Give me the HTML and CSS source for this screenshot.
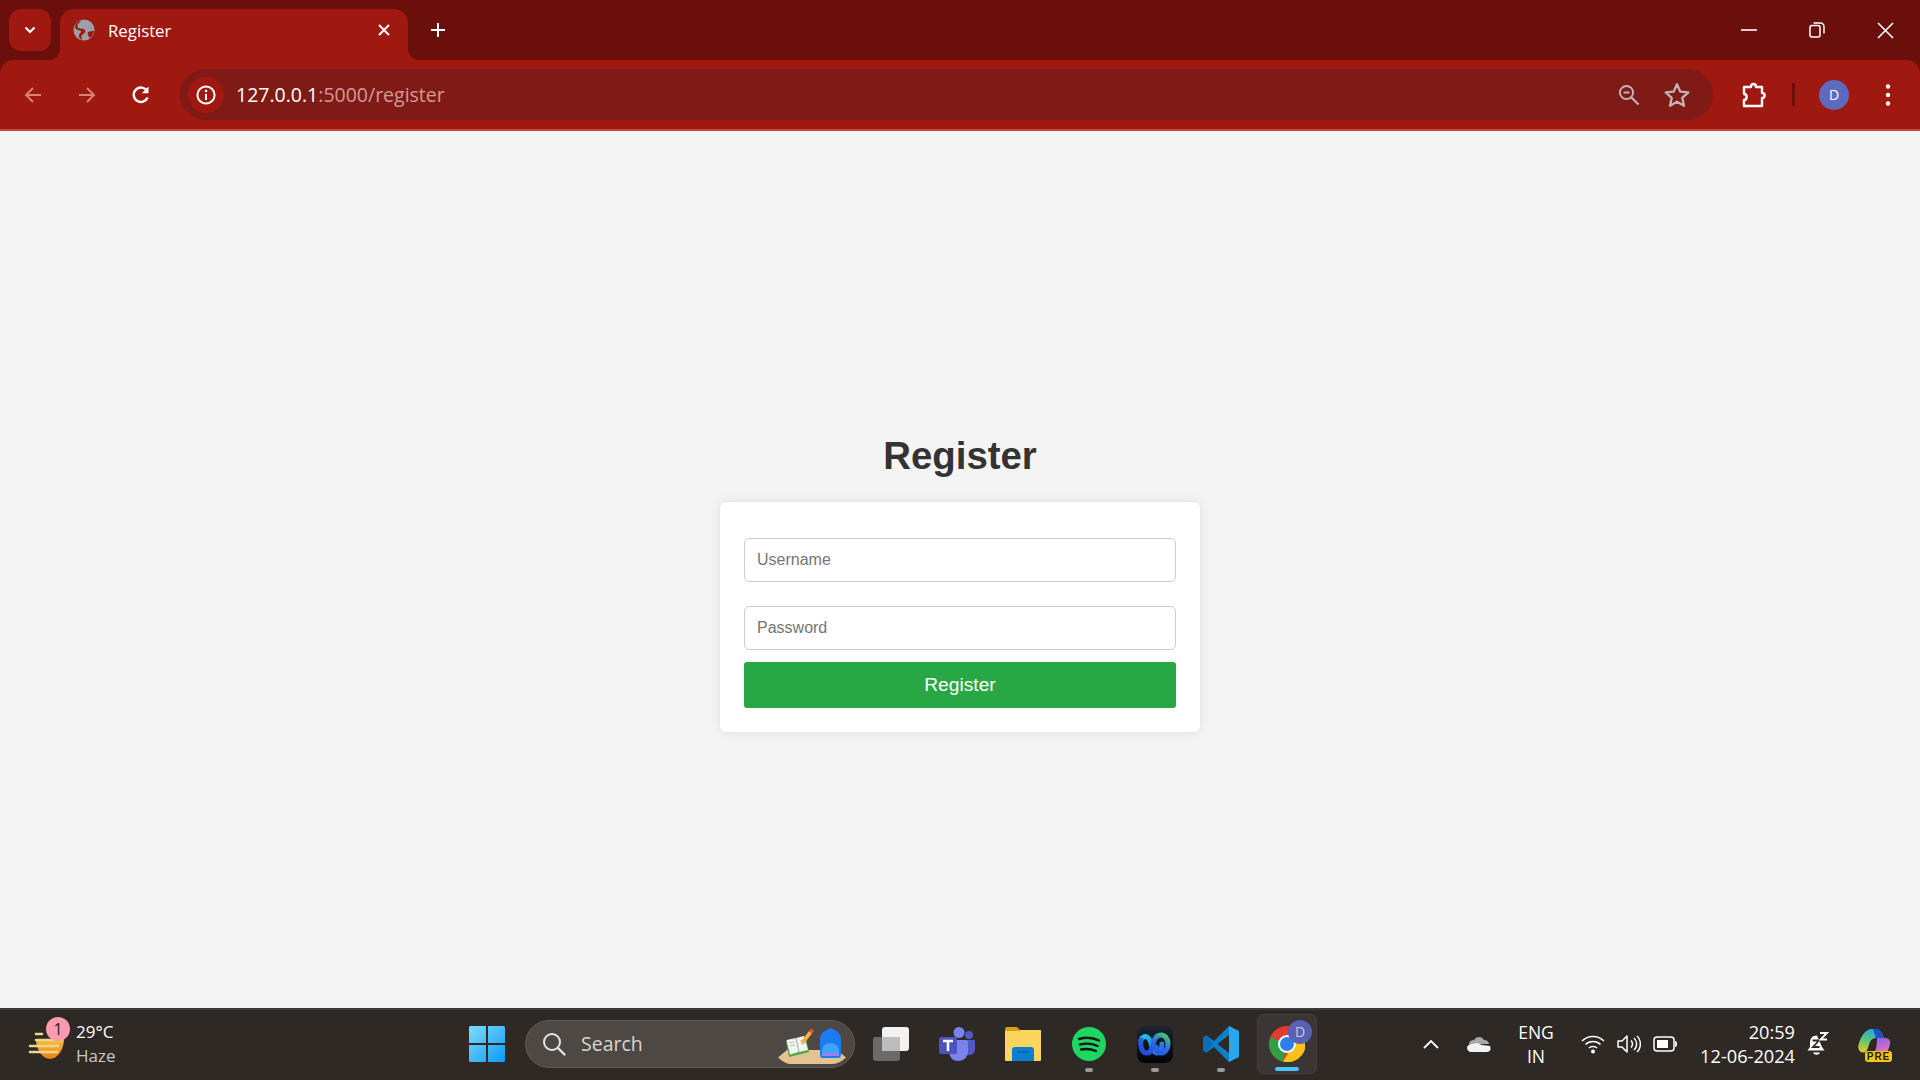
FILE: index.html
```html
<!DOCTYPE html>
<html lang="en">
<head>
    <meta charset="UTF-8">
    <title>Register</title>
    <link rel="stylesheet" href="styles.css">
</head>
<body>
    <div class="browser-top">
        <!-- Tab strip -->
        <div class="tabstrip">
            <div class="tab-search">
                <svg width="16" height="16" viewBox="0 0 16 16"><path d="M3.500 5.500 8 10l4.500-4.500" fill="none" stroke="#fff" stroke-width="2.200"/></svg>
            </div>
            <div class="tab">
                <svg class="favicon" width="22" height="22" viewBox="0 0 22 22"><circle cx="11" cy="11" r="10.500" fill="#9aa0a6"/><path d="M8 1.500C7 4 4 4.500 4.500 7.500c.5 2.500 4 2 6 2.500 2 .5 2.500 2.500 1 4-1.500 1.500-3.500 2-3 4.500l.5 2.500c-1.500-.2-2.500-2-3-3.500-.5-2 1-3 2-4.500.5-1-1-1.500-3-2S1.500 9 2 7c.5-2.500 3-5 6-5.500z" fill="#a01910"/><path d="M15 13c2-1 4-1 6-1-.5 3-2 5.500-4 7-1.500-1-3-4.500-2-6z" fill="#a01910"/></svg>
                <span class="tab-title">Register</span>
                <svg class="tab-close" width="14" height="14" viewBox="0 0 14 14"><path d="M2 2l10 10M12 2 2 12" stroke="#fff" stroke-width="2"/></svg>
            </div>
            <svg class="new-tab" width="18" height="18" viewBox="0 0 18 18"><path d="M9 2v14M2 9h14" stroke="#fff" stroke-width="2"/></svg>
            <div class="win-controls">
                <svg width="16" height="16" viewBox="0 0 16 16"><path d="M0 8h16" stroke="#fff" stroke-width="1.600"/></svg>
                <svg width="16" height="16" viewBox="0 0 16 16"><rect x="1" y="3.500" width="10" height="11.500" rx="2" fill="none" stroke="#fff" stroke-width="1.500"/><path d="M4.500 1h7a3.500 3.500 0 0 1 3.500 3.500v7" fill="none" stroke="#fff" stroke-width="1.400"/></svg>
                <svg width="17" height="17" viewBox="0 0 17 17"><path d="M1 1l15 15M16 1 1 16" stroke="#fff" stroke-width="1.600"/></svg>
            </div>
        </div>

        <!-- Toolbar -->
        <div class="toolbar">
            <svg class="nav-btn" width="20" height="20" viewBox="0 0 20 20"><path d="M18 10H3M10 3l-7 7 7 7" fill="none" stroke="#d9827b" stroke-width="2"/></svg>
            <svg class="nav-btn" width="20" height="20" viewBox="0 0 20 20"><path d="M2 10h15M10 3l7 7-7 7" fill="none" stroke="#d9827b" stroke-width="2"/></svg>
            <svg class="nav-btn" width="20" height="20" viewBox="0 0 20 20"><path d="M16.600 12.500a7.200 7.200 0 1 1-.6-6.600" fill="none" stroke="#fff" stroke-width="2.400"/><path d="M17.500 1.500v6.700h-6.700z" fill="#fff"/></svg>
            <div class="omnibox">
                <div class="site-info">
                    <svg width="20" height="20" viewBox="0 0 20 20"><circle cx="10" cy="10" r="8.600" fill="none" stroke="#fff" stroke-width="2"/><path d="M10 9v6" stroke="#fff" stroke-width="2"/><circle cx="10" cy="6" r="1.300" fill="#fff"/></svg>
                </div>
                <div class="url">127.0.0.1<span class="url-rest">:5000/register</span></div>
                <svg width="22" height="22" viewBox="0 0 22 22"><circle cx="8.500" cy="8.500" r="6.600" fill="none" stroke="#bdb5b3" stroke-width="2"/><path d="M13.500 13.500l7 7" stroke="#bdb5b3" stroke-width="2.200"/><path d="M5.500 8.500h6" stroke="#bdb5b3" stroke-width="2"/></svg>
                <svg class="omni-star" width="28" height="28" viewBox="0 0 24 24"><path d="M12 2.800l2.800 6.300 6.900.7-5.200 4.600 1.500 6.800-6-3.500-6 3.500 1.500-6.800-5.200-4.600 6.900-.7z" fill="none" stroke="#bdb5b3" stroke-width="2" stroke-linejoin="round"/></svg>
            </div>
            <svg class="ext" width="26" height="26" viewBox="0 0 26 26"><path d="M3 5h7c0-4 5-4 5 0h6v6c3.500 0 3.500 5 0 5v8H3v-6c3.500 0 3.500-6 0-6z" fill="none" stroke="#fff" stroke-width="2.400" stroke-linejoin="round"/></svg>
            <div class="tool-sep"></div>
            <div class="avatar">D</div>
            <svg class="menu-dots" width="6" height="24" viewBox="0 0 6 24"><circle cx="3" cy="3.500" r="2.200" fill="#fff"/><circle cx="3" cy="12" r="2.200" fill="#fff"/><circle cx="3" cy="20.500" r="2.200" fill="#fff"/></svg>
        </div>
    </div>

    <!-- Page -->
    <main class="page">
        <h1>Register</h1>
        <form class="card">
            <input type="text" placeholder="Username">
            <input type="password" placeholder="Password">
            <button type="button">Register</button>
        </form>
    </main>

    <!-- Taskbar -->
    <footer class="taskbar">
        <div class="weather">
            <div class="weather-icon">
                <svg width="36" height="36" viewBox="0 0 36 36">
                    <defs>
                        <linearGradient id="sunGrad" x1="0" y1="0" x2="0" y2="1"><stop offset="0" stop-color="#f7c23e"/><stop offset="1" stop-color="#ef7d14"/></linearGradient>
                    </defs>
                    <path d="M8 13h28c0 11-7 20-14 20S8 24 8 13z" fill="url(#sunGrad)"/>
                    <path d="M8 8h6M8 14h26M2 20h28M2 26h27" stroke="#efd586" stroke-width="2.600" stroke-linecap="round"/>
                </svg>
                <span class="badge">1</span>
            </div>
            <div class="weather-text">
                <div>29°C</div>
                <div class="haze">Haze</div>
            </div>
        </div>

        <div class="start-slot">
            <svg width="36" height="36" viewBox="0 0 36 36">
                <defs>
                    <linearGradient id="winGrad" x1="0" y1="0" x2="1" y2="1"><stop offset="0" stop-color="#7fdcfd"/><stop offset="1" stop-color="#0d99f5"/></linearGradient>
                </defs>
                <path d="M1.500 0H17v17H0V1.500A1.500 1.500 0 0 1 1.500 0zM19 0h15.500A1.500 1.500 0 0 1 36 1.500V17H19zM0 19h17v17H1.500A1.500 1.500 0 0 1 0 34.500zM19 19h17v15.500a1.500 1.500 0 0 1-1.500 1.500H19z" fill="url(#winGrad)"/>
            </svg>
        </div>

        <div class="searchbox">
            <svg width="24" height="24" viewBox="0 0 24 24"><circle cx="10" cy="10" r="8" fill="none" stroke="#e8e6e3" stroke-width="2"/><path d="M16 16l6.500 6.500" stroke="#e8e6e3" stroke-width="2.400" stroke-linecap="round"/></svg>
            <span class="search-label">Search</span>
            <svg class="search-art" width="68" height="38" viewBox="0 0 68 38">
                <path d="M0 31.500 9 24h50l9 7.500c-4 3.500-8 6.500-14 6.500H12c-4 0-8-3-12-6.500z" fill="#e5c391"/>
                <path d="M8 16l3 15 20-5-3-15z" fill="#4aa84a"/>
                <path d="M8.500 14 18 12l8-2 4 14-9 2-9 2.500z" fill="#f4f4f0"/>
                <path d="M18 12l3 14" stroke="#9aa4a8" stroke-width="1"/>
                <path d="M11 17l5-1M12 20l5-1M22 15l4-1M23 18l4-1" stroke="#b4bcc0" stroke-width="1"/>
                <path d="M24 14 31 5l3 2.500-7 9-4 1.500z" fill="#f5b13c"/>
                <path d="M31 5l2-2.500 3 2.500-2 2.500z" fill="#e8503e"/>
                <path d="M42 14c0-6 3-9 7-10 1-2.500 6-2.500 7 0 4 1 7 4 7 10v15c0 2-1 3-3 3H45c-2 0-3-1-3-3z" fill="#1a7cf0"/>
                <path d="M44 25c0-5 4-8 8.500-8s8.500 3 8.500 8v4H44z" fill="#3ea4f7"/>
                <path d="M44 27.500h17V30H44z" fill="#a77de8"/>
            </svg>
        </div>

        <div class="task-icons">
            <div class="slot">
                <svg width="36" height="34" viewBox="0 0 36 34"><rect x="0" y="10" width="27" height="24" rx="3" fill="#7a7a7a" opacity=".8"/><rect x="9" y="0" width="27" height="24" rx="3" fill="#f2f2f2"/><path d="M9 10h18v14H9z" fill="#bdbdbd"/></svg>
            </div>
            <div class="slot">
                <svg width="36" height="34" viewBox="0 0 36 34">
                    <circle cx="20" cy="5.500" r="5.500" fill="#7b83eb"/><circle cx="30" cy="8" r="4" fill="#5059c9"/>
                    <path d="M26 13h9c1 0 1 1 1 1v8c0 4-3 6-6 6h-4z" fill="#5059c9"/>
                    <path d="M10 13h17c1 0 2 1 2 2v9c0 6-4 10-10 10S10 29 10 24z" fill="#7b83eb"/>
                    <rect x="0" y="10" width="18" height="17" rx="2" fill="#4b53bc"/>
                    <path d="M4 14h10M9 14v10" stroke="#fff" stroke-width="2.500"/>
                </svg>
            </div>
            <div class="slot">
                <svg width="36" height="34" viewBox="0 0 36 34">
                    <path d="M0 2c0-1 1-2 2-2h10l4 4h-16z" fill="#d89f12"/>
                    <path d="M0 4h13l3-1h20v30c0 .5-.5 1-1 1H1c-.5 0-1-.5-1-1z" fill="#fcd55c"/>
                    <path d="M7 34V23c0-2 1-3 3-3h16c2 0 3 1 3 3v11z" fill="#0d7fd3"/>
                    <path d="M12 25h12" stroke="#0a5fa5" stroke-width="1.500"/>
                </svg>
            </div>
            <div class="slot running">
                <svg width="34" height="34" viewBox="0 0 34 34">
                    <circle cx="17" cy="17" r="17" fill="#1ed760"/>
                    <path d="M7 12c7-2 14-1.500 20 1.500M8 17.500c6-1.500 12-1 17.500 1.500M9 22.500c5-1 10-.7 15 1.500" fill="none" stroke="#161616" stroke-width="2.400" stroke-linecap="round"/>
                </svg>
            </div>
            <div class="slot running">
                <svg width="36" height="37" viewBox="0 0 36 37">
                    <defs>
                        <linearGradient id="webexBg" x1="0" y1="0" x2="0" y2="1"><stop offset="0" stop-color="#1c2433"/><stop offset="1" stop-color="#050506"/></linearGradient>
                        <linearGradient id="webexLeft" x1="0" y1="0" x2="1" y2="1"><stop offset="0" stop-color="#21c4e8"/><stop offset="1" stop-color="#2a62ea"/></linearGradient>
                        <linearGradient id="webexRight" x1="0" y1="1" x2="1" y2="0"><stop offset="0" stop-color="#2148d8"/><stop offset=".6" stop-color="#2a6ce6"/><stop offset="1" stop-color="#4fd05c"/></linearGradient>
                    </defs>
                    <rect width="36" height="37" rx="8" fill="url(#webexBg)"/>
                    <path d="M4 14c1-3 4-4 6-3 3 1 4 6 5 10 1 3 2 6 5 6 4 0 5-6 5-9" fill="none" stroke="url(#webexLeft)" stroke-width="5" stroke-linecap="round"/>
                    <path d="M4 14c-1 5 0 12 5 13 5 1 6-5 7-9 1-5 3-9 8-9 4 0 7 4 7 9 0 5-3 9-7 9-3 0-4-3-5-6" fill="none" stroke="url(#webexRight)" stroke-width="5" stroke-linecap="round"/>
                </svg>
            </div>
            <div class="slot running">
                <svg width="36" height="36" viewBox="0 0 36 36">
                    <path d="M26 0l10 5v26l-10 5z" fill="#24a9f2"/>
                    <path d="M26 0 11 15 3.500 9.500 0 11.500v13L3.500 26.500 11 21l15 15 0-9-11.500-9L26 9z" fill="#0b7fca"/>
                    <path d="M0 11.500v13l3.500 2L10 18 3.500 9.500z" fill="#0a6fb5"/>
                </svg>
            </div>
            <div class="slot active">
                <svg width="36" height="36" viewBox="0 0 36 36">
                    <circle cx="18" cy="18" r="18" fill="#e33b2e"/>
                    <path d="M18 18 1.500 11A18 18 0 0 0 14 35.500z" fill="#2f9e47"/>
                    <path d="M18 9.500h16.500A18 18 0 0 1 14 35.500l8-13z" fill="#fbc116"/>
                    <circle cx="18" cy="18" r="9" fill="#fff"/>
                    <circle cx="18" cy="18" r="7" fill="#2f7fea"/>
                </svg>
                <span class="chrome-badge">D</span>
            </div>
        </div>

        <div class="tray">
            <svg width="16" height="10" viewBox="0 0 16 10"><path d="M1 9l7-7 7 7" fill="none" stroke="#fff" stroke-width="1.800"/></svg>
            <svg class="tray-cloud" width="24" height="16" viewBox="0 0 24 16"><path d="M7 4c2-4 8-4 10 0 3 0 5 2 5 4H2c0-2 2-4 5-4z" fill="#a8a8a8"/><path d="M0 12c0-2 2-4 5-4l5-1 5 2 8 1c1 2 1 6-3 6H4c-2 0-4-2-4-4z" fill="#f2f2f2"/></svg>
            <div class="lang">ENG<br>IN</div>
            <svg class="tray-wifi" width="24" height="20" viewBox="0 0 24 20"><path d="M1 7c6-6 16-6 22 0M4.500 10.500c4-4 11-4 15 0M8 14c2-2 6-2 8 0" fill="none" stroke="#fff" stroke-width="1.500"/><circle cx="12" cy="17.500" r="2" fill="#fff"/></svg>
            <svg class="tray-sound" width="24" height="20" viewBox="0 0 24 20"><path d="M1 7v6h4l5 5V2L5 7z" fill="none" stroke="#fff" stroke-width="1.500" stroke-linejoin="round"/><path d="M14 6.500c2 2 2 5 0 7M17 4c3.500 3 3.500 9 0 12M20 2c4.500 4 4.500 12 0 16" fill="none" stroke="#fff" stroke-width="1.500"/></svg>
            <svg class="tray-battery" width="24" height="16" viewBox="0 0 24 16"><rect x="1" y="1" width="20" height="14" rx="3" fill="none" stroke="#fff" stroke-width="1.500"/><rect x="4" y="4" width="11" height="8" fill="#fff"/><path d="M22 5c1.500 0 2 1 2 3s-.5 3-2 3z" fill="#fff"/></svg>
            <div class="clock">20:59<br>12-06-2024</div>
            <svg class="tray-bell" width="22" height="25" viewBox="0 0 22 25"><path d="M10 3.500c-5 0-7 3.500-7 7.500v4l-2.500 3.500h17L15 15" fill="#fff"/><path d="M6 20.500c1 3 6 3 7 0z" fill="#fff"/><path d="M5.500 8.500h6.500l-6 6.500h6.500" fill="none" stroke="#2e2925" stroke-width="1.800"/><path d="M13 1h7l-6.500 6.500H20" fill="none" stroke="#fff" stroke-width="1.800"/></svg>
            <div class="copilot">
                <svg width="36" height="34" viewBox="0 0 36 34">
                    <defs>
                        <linearGradient id="copLeft" x1="0.500" y1="0" x2="0.200" y2="1"><stop offset="0" stop-color="#23a8ee"/><stop offset=".5" stop-color="#5ec96a"/><stop offset="1" stop-color="#f2c22a"/></linearGradient>
                        <linearGradient id="copRight" x1="0.500" y1="0" x2="0.700" y2="1"><stop offset="0" stop-color="#9a62e6"/><stop offset="1" stop-color="#f276b0"/></linearGradient>
                    </defs>
                    <path d="M21 10h8c4 0 6 3 5 6-1 4-2 9-7 11H17c3-4 4-10 4-17z" fill="url(#copRight)"/>
                    <path d="M14 1C8 3 5 9 3 15c-2 5 0 10 5 9.500 3-.5 4-4.500 5-7.500 1-4 3-7 7-7h8c-2-5-4-9-8-9z" fill="url(#copLeft)"/>
                    <path d="M17 1h4c3 0 5 4 7 9h-8z" fill="#1c52c9"/>
                </svg>
                <span class="pre">PRE</span>
            </div>
        </div>
    </footer>
</body>
</html>
```

FILE: styles.css
```css
* {
    box-sizing: border-box;
}
body {
    margin: 0;
    height: 1080px;
    display: flex;
    flex-direction: column;
    overflow: hidden;
    font-family: 'Liberation Sans', Arial, sans-serif;
    background-color: #f4f4f4;
}
.browser-top {
    flex: none;
    background-color: #6a0f0c;
}

/* tab strip */
.tabstrip {
    height: 60px;
    display: flex;
    align-items: flex-end;
    color: #fff;
    font-family: 'Open Sans', sans-serif;
}
.tab-search {
    width: 42px;
    height: 42px;
    margin: 0 0 9px 9px;
    border-radius: 12px;
    background-color: #a01910;
    display: flex;
    align-items: center;
    justify-content: center;
}
.tab {
    width: 348px;
    height: 51px;
    margin-left: 9px;
    padding: 0 17px 9px 13px;
    border-radius: 14px 14px 0 0;
    background-color: #a01910;
    display: flex;
    align-items: center;
    position: relative;
}
.tab::before,
.tab::after {
    content: "";
    position: absolute;
    bottom: 0;
    width: 12px;
    height: 12px;
    background: radial-gradient(circle at 0 0, #6a0f0c 12px, #a01910 12.5px);
}
.tab::before {
    left: -12px;
}
.tab::after {
    right: -12px;
    transform: scaleX(-1);
}
.favicon {
    flex: none;
}
.tab-title {
    margin-left: 13px;
    flex: 1;
    font-size: 16.800px;
}
.new-tab {
    margin: 0 0 21px 21px;
}
.win-controls {
    margin-left: auto;
    height: 60px;
    padding-right: 26px;
    display: flex;
    align-items: center;
    gap: 52px;
}

/* toolbar */
.toolbar {
    height: 71px;
    border-bottom: 2px solid #c2473d;
    border-radius: 14px 14px 0 0;
    background-color: #a01910;
    display: flex;
    align-items: center;
}
.nav-btn {
    margin-left: 34px;
    flex: none;
}
.nav-btn:first-child {
    margin-left: 23px;
}
.omnibox {
    width: 1533px;
    height: 51px;
    margin-left: 29px;
    padding: 0 22px 0 8px;
    border-radius: 26px;
    background-color: #7f1a16;
    display: flex;
    align-items: center;
    flex: none;
}
.site-info {
    width: 36px;
    height: 36px;
    border-radius: 50%;
    background-color: #a01910;
    display: flex;
    align-items: center;
    justify-content: center;
    flex: none;
}
.url {
    margin-left: 12px;
    flex: 1;
    color: #fff;
    font-family: 'Open Sans', sans-serif;
    font-size: 19.500px;
}
.url-rest {
    color: #d39a95;
}
.omni-star {
    margin-left: 23px;
}
.ext {
    margin-left: 28px;
    flex: none;
}
.tool-sep {
    width: 3px;
    height: 23px;
    margin-left: 25px;
    background-color: #6a0f0c;
}
.avatar {
    width: 30px;
    height: 30px;
    margin-left: 24px;
    border-radius: 50%;
    background-color: #5c6bc0;
    color: #fff;
    font-family: 'Open Sans', sans-serif;
    font-size: 14px;
    display: flex;
    align-items: center;
    justify-content: center;
}
.menu-dots {
    margin-left: 36px;
}

/* page */
.page {
    flex: 1;
    padding-top: 302px;
    display: flex;
    flex-direction: column;
    align-items: center;
}
h1 {
    margin: 0 0 23px;
    font-size: 38.400px;
    line-height: 46px;
    color: #333;
}
.card {
    width: 480px;
    padding: 24px;
    border-radius: 6px;
    background-color: #fff;
    box-shadow: 0 0 12px rgba(0, 0, 0, 0.1);
}
.card input {
    display: block;
    width: 100%;
    height: 44px;
    margin: 12px 0 24px;
    padding: 0 12px;
    border: 1px solid #ccc;
    border-radius: 5px;
    font-family: 'Liberation Sans', Arial, sans-serif;
    font-size: 16px;
}
.card input + input {
    margin-bottom: 12px;
}
.card input::placeholder {
    color: #757575;
}
.card button {
    display: block;
    width: 100%;
    height: 46px;
    padding: 0;
    border: none;
    border-radius: 3px;
    background-color: #28a745;
    color: #fff;
    font-family: 'Liberation Sans', Arial, sans-serif;
    font-size: 19.200px;
}

/* taskbar */
.taskbar {
    height: 72px;
    flex: none;
    box-shadow: inset 0 2px 0 #3d3a38;
    background-color: #2e2925;
    color: #fff;
    font-family: 'Open Sans', sans-serif;
    display: flex;
    align-items: center;
}
.weather {
    width: 457px;
    padding-left: 28px;
    display: flex;
    align-items: center;
}
.weather-icon {
    width: 36px;
    height: 36px;
    position: relative;
}
.badge {
    position: absolute;
    top: -9px;
    left: 18px;
    width: 24px;
    height: 24px;
    border-radius: 50%;
    background-color: #ff9aaf;
    color: #222;
    font-size: 16px;
    line-height: 24px;
    text-align: center;
}
.weather-text {
    margin-left: 12px;
    padding-bottom: 1px;
    font-size: 17px;
    line-height: 24px;
}
.haze {
    color: #c9c7c5;
}
.start-slot {
    width: 60px;
    display: flex;
    justify-content: center;
}
.searchbox {
    width: 330px;
    height: 48px;
    margin-left: 8px;
    padding-left: 16px;
    border: 1px solid #5f5b58;
    border-radius: 24px;
    background-color: #4d4844;
    display: flex;
    align-items: center;
    position: relative;
}
.search-label {
    margin-left: 15px;
    padding-bottom: 1px;
    color: #d8d6d3;
    font-size: 19.500px;
}
.search-art {
    position: absolute;
    right: 8px;
    bottom: 3px;
}
.task-icons {
    margin-left: 6px;
    display: flex;
    gap: 6px;
}
.slot {
    width: 60px;
    height: 60px;
    border-radius: 6px;
    display: flex;
    align-items: center;
    justify-content: center;
    position: relative;
}
.slot.running::after,
.slot.active::after {
    content: "";
    position: absolute;
    bottom: 2px;
    left: 26px;
    width: 8px;
    height: 4px;
    border-radius: 2px;
    background-color: #9a9a9a;
}
.slot.active {
    border: 1px solid #45403d;
    background-color: #3b3633;
}
.slot.active::after {
    left: 17px;
    width: 24px;
    background-color: #4cc2ff;
}
.chrome-badge {
    position: absolute;
    top: 5px;
    right: 4px;
    width: 24px;
    height: 24px;
    border-radius: 50%;
    background-color: #5a60b4;
    color: #c5c7e0;
    font-size: 14px;
    line-height: 24px;
    text-align: center;
}
.tray {
    margin-left: 106px;
    display: flex;
    align-items: center;
    flex: none;
}
.tray-cloud {
    margin-left: 28px;
}
.lang {
    width: 44px;
    margin-left: 23px;
    font-size: 17.500px;
    line-height: 24px;
    text-align: center;
}
.tray-wifi {
    margin-left: 23px;
}
.tray-sound {
    margin-left: 12px;
}
.tray-battery {
    margin-left: 12px;
}
.clock {
    width: 100px;
    margin-left: 18px;
    padding-bottom: 1px;
    font-size: 18.200px;
    line-height: 24px;
    text-align: right;
}
.tray-bell {
    margin-left: 12px;
}
.copilot {
    width: 36px;
    height: 34px;
    margin: 2px 0 0 27px;
    position: relative;
}
.pre {
    position: absolute;
    right: 0;
    bottom: 0;
    width: 27px;
    height: 11px;
    border-radius: 3px;
    background-color: #f9c513;
    color: #222;
    font-family: 'Liberation Sans', sans-serif;
    font-size: 10px;
    font-weight: 700;
    line-height: 11px;
    letter-spacing: 1px;
    text-align: center;
}
```
